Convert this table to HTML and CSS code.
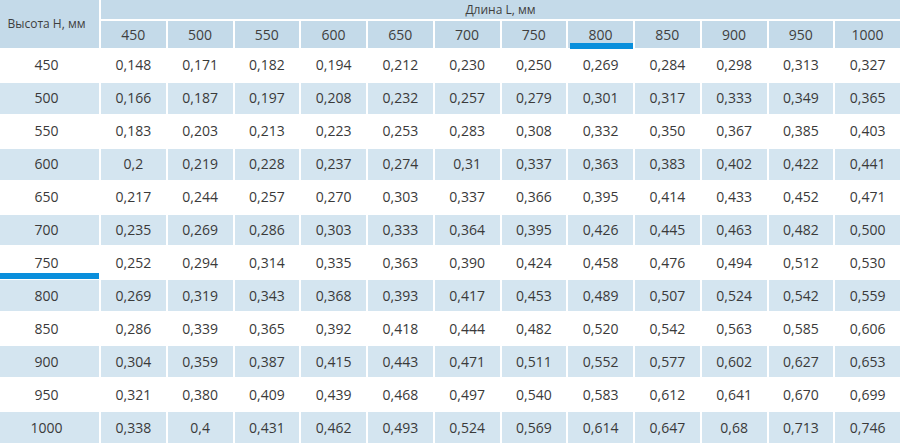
FILE: index.html
```html
<!DOCTYPE html>
<html lang="ru">
<head>
<meta charset="utf-8">
<title>Таблица</title>
<link rel="stylesheet" href="styles.css">
</head>
<body>
<div class="grid">
  <div class="cell head hcorner">Высота Н, мм</div>
  <div class="cell head htitle">Длина L, мм</div>
  <div class="row">
    <div class="cell head num">450</div><div class="cell head num">500</div><div class="cell head num">550</div><div class="cell head num">600</div><div class="cell head num">650</div><div class="cell head num">700</div><div class="cell head num">750</div><div class="cell head num marked">800<span class="bar bar-top"></span></div><div class="cell head num">850</div><div class="cell head num">900</div><div class="cell head num">950</div><div class="cell head num">1000</div>
  </div>
  <div class="row"><div class="cell first">450</div><div class="cell">0,148</div><div class="cell">0,171</div><div class="cell">0,182</div><div class="cell">0,194</div><div class="cell">0,212</div><div class="cell">0,230</div><div class="cell">0,250</div><div class="cell">0,269</div><div class="cell">0,284</div><div class="cell">0,298</div><div class="cell">0,313</div><div class="cell">0,327</div></div>
  <div class="row alt"><div class="cell first">500</div><div class="cell">0,166</div><div class="cell">0,187</div><div class="cell">0,197</div><div class="cell">0,208</div><div class="cell">0,232</div><div class="cell">0,257</div><div class="cell">0,279</div><div class="cell">0,301</div><div class="cell">0,317</div><div class="cell">0,333</div><div class="cell">0,349</div><div class="cell">0,365</div></div>
  <div class="row"><div class="cell first">550</div><div class="cell">0,183</div><div class="cell">0,203</div><div class="cell">0,213</div><div class="cell">0,223</div><div class="cell">0,253</div><div class="cell">0,283</div><div class="cell">0,308</div><div class="cell">0,332</div><div class="cell">0,350</div><div class="cell">0,367</div><div class="cell">0,385</div><div class="cell">0,403</div></div>
  <div class="row alt"><div class="cell first">600</div><div class="cell">0,2</div><div class="cell">0,219</div><div class="cell">0,228</div><div class="cell">0,237</div><div class="cell">0,274</div><div class="cell">0,31</div><div class="cell">0,337</div><div class="cell">0,363</div><div class="cell">0,383</div><div class="cell">0,402</div><div class="cell">0,422</div><div class="cell">0,441</div></div>
  <div class="row"><div class="cell first">650</div><div class="cell">0,217</div><div class="cell">0,244</div><div class="cell">0,257</div><div class="cell">0,270</div><div class="cell">0,303</div><div class="cell">0,337</div><div class="cell">0,366</div><div class="cell">0,395</div><div class="cell">0,414</div><div class="cell">0,433</div><div class="cell">0,452</div><div class="cell">0,471</div></div>
  <div class="row alt"><div class="cell first">700</div><div class="cell">0,235</div><div class="cell">0,269</div><div class="cell">0,286</div><div class="cell">0,303</div><div class="cell">0,333</div><div class="cell">0,364</div><div class="cell">0,395</div><div class="cell">0,426</div><div class="cell">0,445</div><div class="cell">0,463</div><div class="cell">0,482</div><div class="cell">0,500</div></div>
  <div class="row"><div class="cell first marked">750<span class="bar bar-side"></span></div><div class="cell">0,252</div><div class="cell">0,294</div><div class="cell">0,314</div><div class="cell">0,335</div><div class="cell">0,363</div><div class="cell">0,390</div><div class="cell">0,424</div><div class="cell">0,458</div><div class="cell">0,476</div><div class="cell">0,494</div><div class="cell">0,512</div><div class="cell">0,530</div></div>
  <div class="row alt"><div class="cell first">800</div><div class="cell">0,269</div><div class="cell">0,319</div><div class="cell">0,343</div><div class="cell">0,368</div><div class="cell">0,393</div><div class="cell">0,417</div><div class="cell">0,453</div><div class="cell">0,489</div><div class="cell">0,507</div><div class="cell">0,524</div><div class="cell">0,542</div><div class="cell">0,559</div></div>
  <div class="row"><div class="cell first">850</div><div class="cell">0,286</div><div class="cell">0,339</div><div class="cell">0,365</div><div class="cell">0,392</div><div class="cell">0,418</div><div class="cell">0,444</div><div class="cell">0,482</div><div class="cell">0,520</div><div class="cell">0,542</div><div class="cell">0,563</div><div class="cell">0,585</div><div class="cell">0,606</div></div>
  <div class="row alt"><div class="cell first">900</div><div class="cell">0,304</div><div class="cell">0,359</div><div class="cell">0,387</div><div class="cell">0,415</div><div class="cell">0,443</div><div class="cell">0,471</div><div class="cell">0,511</div><div class="cell">0,552</div><div class="cell">0,577</div><div class="cell">0,602</div><div class="cell">0,627</div><div class="cell">0,653</div></div>
  <div class="row"><div class="cell first">950</div><div class="cell">0,321</div><div class="cell">0,380</div><div class="cell">0,409</div><div class="cell">0,439</div><div class="cell">0,468</div><div class="cell">0,497</div><div class="cell">0,540</div><div class="cell">0,583</div><div class="cell">0,612</div><div class="cell">0,641</div><div class="cell">0,670</div><div class="cell">0,699</div></div>
  <div class="row alt"><div class="cell first">1000</div><div class="cell">0,338</div><div class="cell">0,4</div><div class="cell">0,431</div><div class="cell">0,462</div><div class="cell">0,493</div><div class="cell">0,524</div><div class="cell">0,569</div><div class="cell">0,614</div><div class="cell">0,647</div><div class="cell">0,68</div><div class="cell">0,713</div><div class="cell">0,746</div></div>
</div>
</body>
</html>
```

FILE: styles.css
```css
html, body {
  margin: 0;
  padding: 0;
  background: #ffffff;
}

body {
  font-family: "Open Sans", "Noto Sans", sans-serif;
  color: #3a3a3a;
}

.grid {
  display: grid;
  width: 900px;
  height: 443px;
  grid-template-columns: 99px repeat(12, 1fr);
  grid-template-rows: 19px 27px repeat(12, 1fr);
  gap: 2px;
}

.row {
  display: contents;
}

.cell {
  display: flex;
  align-items: center;
  justify-content: center;
  font-size: 14px;
  line-height: 1;
  white-space: nowrap;
}

.row.alt > .cell {
  background: #d4e5f0;
}

.head {
  background: #c4dae9;
  color: #3f3f3f;
}

.hcorner {
  grid-row: 1 / 3;
  grid-column: 1;
  font-size: 12px;
  padding-right: 6px;
}

.htitle {
  grid-row: 1;
  grid-column: 2 / -1;
  font-size: 12px;
}

.first {
  grid-column: 1;
  padding-right: 6px;
}

.marked {
  position: relative;
}

.bar {
  position: absolute;
  height: 6px;
  bottom: -1px;
  background: #0a8fdc;
}

.bar-top {
  left: 2px;
  right: 0;
}

.bar-side {
  left: 0;
  right: 0;
}
```
